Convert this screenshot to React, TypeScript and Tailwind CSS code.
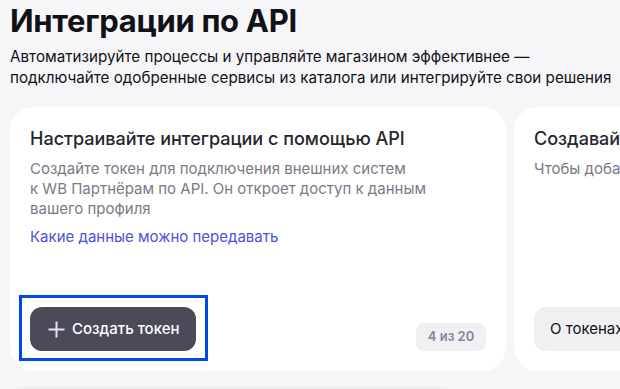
const CARDS = [
  {
    title: "Настраивайте интеграции с помощью API",
    body: ["Создайте токен для подключения внешних систем", "к WB Партнёрам по API. Он откроет доступ к данным", "вашего профиля"],
    link: "Какие данные можно передавать",
  },
  {
    title: "Создавайте токены для тестового контура",
    body: ["Чтобы добавить токен, перейдите в раздел"],
    link: "",
  },
];

function PlusIcon() {
  return (
    <svg width="17" height="17" viewBox="0 0 17 17" fill="none" className="shrink-0">
      <path d="M8.5 0.5v16M0.5 8.5h16" stroke="#e4e4ea" strokeWidth="2" />
    </svg>
  );
}

export default function App() {
  return (
    <div className="h-[389px] w-[620px] overflow-hidden bg-[#f6f6f8] pl-[10px] font-['Inter',sans-serif] text-[#111118]">
      <h1 className="pt-[1px] text-[31px] font-bold leading-[40px] tracking-[-0.01em]">
        Интеграции по API
      </h1>
      <p className="mt-[5px] whitespace-nowrap text-[15.2px] leading-[21px]">
        Автоматизируйте процессы и управляйте магазином эффективнее —
        <br />
        подключайте одобренные сервисы из каталога или интегрируйте свои решения
      </p>

      <div className="mt-[19px] flex gap-[8px]">
        {CARDS.map((c, i) => (
          <section
            key={i}
            className="flex h-[264px] w-[496px] shrink-0 flex-col rounded-[24px] bg-white px-[20px] pb-[20px] pt-[20px]"
          >
            <h2 className="whitespace-nowrap text-[18px] font-medium leading-[24px] text-[#26262e]">
              {c.title}
            </h2>
            <p className="mt-[8px] whitespace-nowrap text-[15px] leading-[20px] text-[#7a7a86]">
              {c.body.map((line, j) => (
                <span key={j} className="block">
                  {line}
                </span>
              ))}
            </p>
            {c.link && (
              <a className="mt-[8px] text-[15px] leading-[20px] text-[#5050d8]">{c.link}</a>
            )}
            <div className="mt-auto flex items-end justify-between">
              {i === 0 ? (
                <>
                  <button className="relative flex h-[44px] items-center gap-[7px] rounded-[12px] bg-[#4b4a58] pl-[18px] pr-[17px] text-[15px] font-medium text-white">
                    <PlusIcon />
                    Создать токен
                    <span className="pointer-events-none absolute -bottom-[10px] -left-[11px] -right-[12px] -top-[12px] border-[3px] border-[#0049e6]" />
                  </button>
                  <span className="flex h-[28px] w-[70px] items-center justify-center rounded-[8px] bg-[#f0f0f3] text-[13px] font-semibold text-[#85859a]">
                    4 из 20
                  </span>
                </>
              ) : (
                <button className="flex h-[44px] items-center whitespace-nowrap rounded-[12px] bg-[#f0f0f3] px-[16px] text-[15px] text-[#111118]">
                  О токенах и доступах
                </button>
              )}
            </div>
          </section>
        ))}
      </div>

      <div className="mt-[16px] h-[20px] w-[444px] rounded-t-[12px] bg-[#eeeef1]" />
    </div>
  );
}
